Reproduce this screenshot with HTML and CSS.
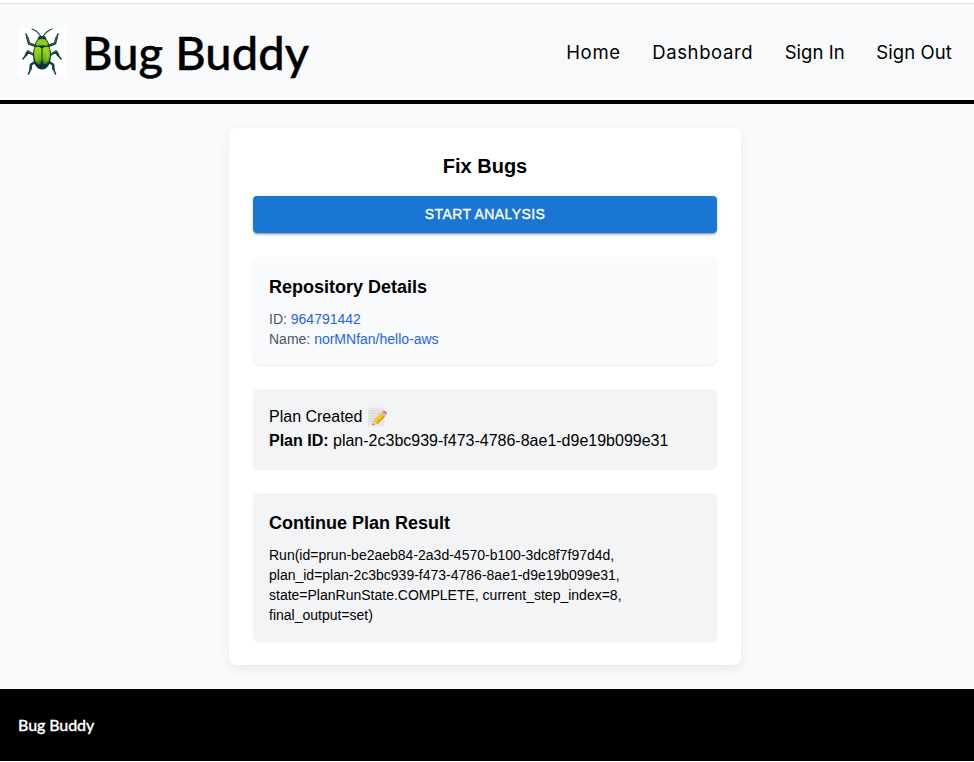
FILE: index.html
```html
<!DOCTYPE html>
<html lang="en">
<head>
<meta charset="utf-8">
<title>Bug Buddy</title>
<link rel="stylesheet" href="styles.css">
</head>
<body>
<header class="header">
  <div class="brand">
    <svg class="logo" viewBox="0 0 48 48" aria-hidden="true">
      <defs>
        <linearGradient id="shell" x1="0" y1="0" x2="0" y2="1">
          <stop offset="0" stop-color="#a4dc14"/><stop offset=".6" stop-color="#72c010"/><stop offset="1" stop-color="#2f7d22"/>
        </linearGradient>
      </defs>
      <rect width="48" height="48" fill="#fff"/>
      <g fill="none" stroke="#183f49" stroke-linecap="round" stroke-linejoin="round">
        <path stroke-width="1.1" d="M23 9Q20 3 14 1M25 9Q28 3 34 1"/>
        <path stroke-width="2.6" d="M18 18 11 15.500 9.500 10M30 18 37 15.500 38.500 10M16 27 10 23.500 8 27M32 27 38 23.500 40 27M17 34 13 36.500 12.500 41M31 34 35 36.500 35.500 41"/>
        <path stroke-width="1.6" d="M9.500 10 8 6M38.500 10 40 6M8 27 5 31M40 27 43 31M12.500 41 10.500 46M35.500 41 37.500 46"/>
        <path stroke="#397c27" stroke-width=".8" d="M16 17 11 15 9.500 10M32 17 37 15 38.500 10M15 26 10 23.500M33 26 38 23.500"/>
      </g>
      <path d="M19.500 11.500Q20 7 24 8Q28 7 28.500 11.500Z" fill="#173f3d"/>
      <path d="M17.500 18Q17.500 10.500 24 10.500Q30.500 10.500 30.500 18Z" fill="#86ce12" stroke="#123943" stroke-width="1"/>
      <path d="M16.500 19Q24 16 31.500 19Q34.500 26 31.500 36Q28.500 41.500 24 41.500Q19.500 41.500 16.500 36Q13.500 26 16.500 19Z" fill="#102f3e"/>
      <path d="M17 19.500Q21 17.500 23.500 20.500V32Q23 35.500 21.500 36.500Q19 35.500 17.500 34Q14.800 27 17 19.500ZM31 19.500Q27 17.500 24.500 20.500V32Q25 35.500 26.500 36.500Q29 35.500 30.500 34Q33.200 27 31 19.500Z" fill="url(#shell)"/>
      <path d="M19.500 22Q17.500 27 19.500 33M28.500 22Q30.500 27 28.500 33" fill="none" stroke="#b3e235" stroke-width=".6"/>
    </svg>
    <h1 class="brand-name">Bug Buddy</h1>
  </div>
  <nav class="nav">
    <a class="nav-home">Home</a>
    <a class="nav-dashboard">Dashboard</a>
    <a class="nav-in">Sign In</a>
    <a class="nav-out">Sign Out</a>
  </nav>
</header>
<main class="main">
  <section class="card">
    <h2 class="card-title">Fix Bugs</h2>
    <button class="start" type="button">START ANALYSIS</button>
    <div class="panel repo">
      <h3>Repository Details</h3>
      <p>ID: <span class="value">964791442</span></p>
      <p>Name: <span class="value">norMNfan/hello-aws</span></p>
    </div>
    <div class="panel plan">
      <p>Plan Created
        <svg class="memo" viewBox="0 0 20 20" aria-hidden="true">
          <path d="M1.5 1H17V19H1.5Z" fill="#e7e7e5" stroke="#dcdcdc" stroke-width=".5"/>
          <path d="M3 4H15M3 6.5H14M3 9H12M3 11.5H9M3 14H7" stroke="#c8cacc" stroke-width=".8" stroke-dasharray="2 .6"/>
          <path d="m5.500 18 1.200-5L14.500 5.500l4 3.500L10.500 17Z" fill="#f7c52d"/>
          <path d="m9 16.500 8.300-8.300 1.200.8L10.500 17Z" fill="#d98c18"/>
          <path d="m14 6 1.500-1.500 3.700 3.500L17.700 9.700Z" fill="#b9c4c8"/>
          <path d="m15.500 4.500.8-.7q1-.6 2.600.8 1.300 1.500.7 2.600l-.6.7Z" fill="#ed7474"/>
          <path d="m5.500 18 1.200-5L10.500 17Z" fill="#e8cba0"/><path d="m5.500 18 .4-1.700 1.300 1.200Z" fill="#333"/>
        </svg>
      </p>
      <p><strong>Plan ID:</strong> plan-2c3bc939-f473-4786-8ae1-d9e19b099e31</p>
    </div>
    <div class="panel result">
      <h3>Continue Plan Result</h3>
      <p>Run(id=prun-be2aeb84-2a3d-4570-b100-3dc8f7f97d4d,<br>plan_id=plan-2c3bc939-f473-4786-8ae1-d9e19b099e31,<br>state=PlanRunState.COMPLETE, current_step_index=8,<br>final_output=set)</p>
    </div>
  </section>
</main>
<footer class="footer">Bug Buddy</footer>
</body>
</html>
```
FILE: styles.css
```css
* { box-sizing: border-box; }
body {
  margin: 0;
  padding-top: 3px;
  background: #fff;
  color: #000;
  font: 16px/24px "Liberation Sans", Arial, sans-serif;
}
h1, h2, h3, p { margin: 0; }
.header {
  display: flex;
  align-items: center;
  justify-content: space-between;
  height: 101px;
  padding: 0 22px 0 18px;
  background: #f9fafc;
  border-top: 1px solid #e0e0e0;
  border-bottom: 4px solid #000;
}
.brand { display: flex; align-items: center; gap: 16px; }
.logo { width: 48px; height: 48px; }
.brand-name {
  font: 500 47px/48px Lato, sans-serif;
  letter-spacing: 0.1px;
  white-space: nowrap;
  -webkit-text-stroke: .4px #000;
}
.nav { display: flex; gap: 31.5px; font: 18.5px/28px Inter, sans-serif; }
.nav a { white-space: nowrap; }
.nav-home { letter-spacing: .7px; }
.nav-dashboard { letter-spacing: .6px; }
.nav-in { letter-spacing: .05px; }
.nav-out { letter-spacing: .1px; }
.main {
  height: 585px;
  padding: 24px 4px 24px 0;
  background: #f9fafc;
}
.card {
  width: 512px;
  height: 537px;
  margin: 0 auto;
  padding: 24px;
  background: #fff;
  border-radius: 8px;
  box-shadow: 0 4px 12px rgba(0, 0, 0, .07);
}
.card-title { font-size: 20px; line-height: 28px; text-align: center; }
.start {
  display: block;
  width: 100%;
  height: 37px;
  margin: 16px 0 24px;
  padding: 0 0 2px;
  border: 0;
  border-radius: 4px;
  background: #1976d2;
  color: #fff;
  font: 14px/24px "Liberation Sans", Arial, sans-serif;
  letter-spacing: .4px;
  -webkit-text-stroke: .35px #fff;
  box-shadow: 0 3px 1px -2px rgba(0,0,0,.2), 0 2px 2px rgba(0,0,0,.14), 0 1px 5px rgba(0,0,0,.12);
}
.panel {
  padding: 16px;
  border-radius: 6px;
  background: #f3f4f6;
  box-shadow: 0 1px 2px rgba(0,0,0,.06), 0 0 1px rgba(0,0,0,.06);
}
.panel + .panel { margin-top: 24px; }
.panel h3 { margin-bottom: 8px; font-size: 18px; line-height: 28px; }
.repo { background: #f9fafc; color: #4b5563; font-size: 14px; line-height: 20px; }
.repo h3 { color: #000; }
.value { color: #2563eb; }
.plan { height: 80px; }
.memo { width: 20px; height: 20px; vertical-align: -5px; }
.result { font-size: 14px; line-height: 20px; }
.footer {
  height: 72px;
  padding: 24px 18px;
  background: #000;
  color: #fff;
  font: 500 16px/24px Lato, sans-serif;
  letter-spacing: -.1px;
  -webkit-text-stroke: .3px #fff;
}
```
